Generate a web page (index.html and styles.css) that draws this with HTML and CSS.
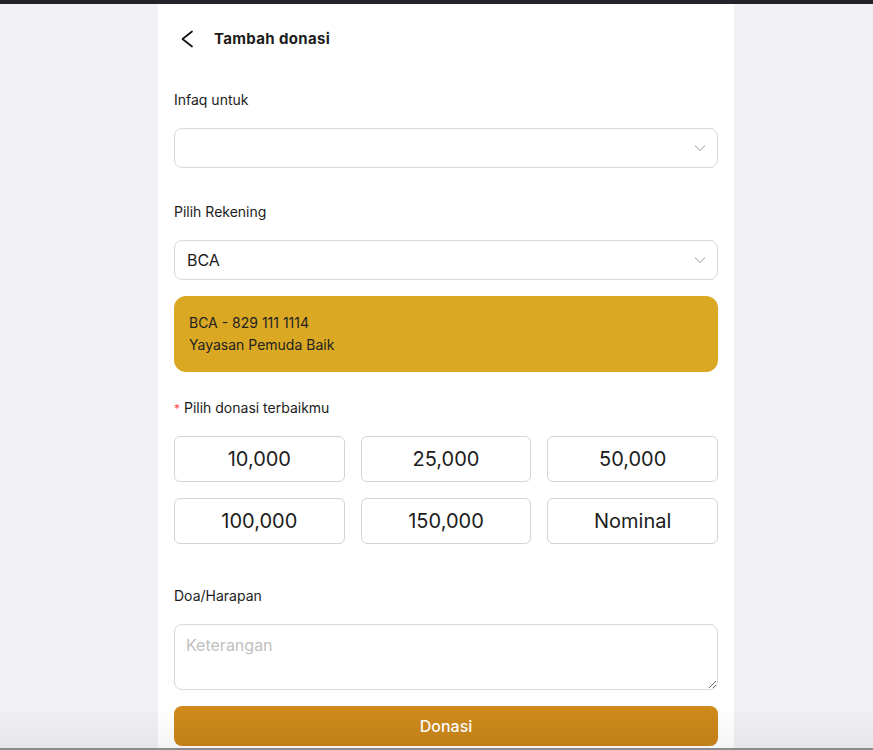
FILE: index.html
```html
<!DOCTYPE html>
<html lang="id">
<head>
<meta charset="utf-8">
<title>Tambah donasi</title>
<link rel="stylesheet" href="styles.css">
</head>
<body>
<div class="topbar"></div>
<main class="page">
  <header class="header">
    <svg class="back" width="24" height="24" viewBox="0 0 24 24" fill="none" stroke="#111" stroke-width="1.7" stroke-linecap="round" stroke-linejoin="round"><path d="M17 4.5 L7.5 12 L17 19.5"/></svg>
    <h1 class="title">Tambah donasi</h1>
  </header>

  <section class="field">
    <div class="label">Infaq untuk</div>
    <div class="select">
      <span class="select-value"></span>
      <svg class="caret" width="12" height="8" viewBox="0 0 12 8" fill="none" stroke="#bdbdbd" stroke-width="1.1"><path d="M1 1.5 L6 6.5 L11 1.5"/></svg>
    </div>
  </section>

  <section class="field field-rek">
    <div class="label">Pilih Rekening</div>
    <div class="select">
      <span class="select-value">BCA</span>
      <svg class="caret" width="12" height="8" viewBox="0 0 12 8" fill="none" stroke="#bdbdbd" stroke-width="1.1"><path d="M1 1.5 L6 6.5 L11 1.5"/></svg>
    </div>
    <div class="account">
      <div>BCA - 829 111 1114</div>
      <div>Yayasan Pemuda Baik</div>
    </div>
  </section>

  <section class="field field-amount">
    <div class="label"><span class="req">*</span> Pilih donasi terbaikmu</div>
    <div class="amounts">
      <button class="amount">10,000</button>
      <button class="amount">25,000</button>
      <button class="amount">50,000</button>
      <button class="amount">100,000</button>
      <button class="amount">150,000</button>
      <button class="amount">Nominal</button>
    </div>
  </section>

  <section class="field field-doa">
    <div class="label">Doa/Harapan</div>
    <textarea class="textarea" placeholder="Keterangan"></textarea>
    <button class="submit">Donasi</button>
  </section>
</main>
<div class="bottom-fade"></div>
<div class="bottom-line"></div>
</body>
</html>
```
FILE: styles.css
```css
html, body {
  margin: 0;
  padding: 0;
  height: 100%;
  overflow: hidden;
}
body {
  background: #f0f0f5;
  font-family: Inter, "Noto Sans", sans-serif;
  color: #1c1c1c;
}
.topbar {
  height: 4px;
  background: #222228;
}
.page {
  width: 544px;
  margin-left: 158px;
  padding: 0 16px;
  background: #fff;
  min-height: 746px;
  box-sizing: content-box;
}
.header {
  height: 70px;
  display: flex;
  align-items: center;
  padding-bottom: 1px;
  box-sizing: border-box;
}
.back {
  margin-left: 1px;
  margin-right: 15px;
  width: 24px;
  height: 24px;
}
.title {
  margin: 0;
  font-size: 15px;
  font-weight: 700;
  letter-spacing: 0.35px;
}
.field {
  padding-top: 15px;
}
.field-rek { padding-top: 33px; }
.field-amount { padding-top: 25px; }
.field-doa { padding-top: 41px; }
.label {
  font-size: 14px;
  line-height: 22px;
  height: 22px;
  margin-bottom: 17px;
  overflow: hidden;
}
.req {
  color: #ff4d4f;
  font-size: 12px;
  line-height: 1;
}
.select {
  height: 38px;
  border: 1px solid #d9d9d9;
  border-radius: 8px;
  display: flex;
  align-items: center;
  justify-content: space-between;
  padding: 0 12px;
}
.select-value {
  font-size: 16px;
}
.caret {
  margin-right: -1px;
}
.account {
  margin-top: 16px;
  background: #daa822;
  border-radius: 12px;
  height: 76px;
  box-sizing: border-box;
  padding: 16px 15px;
  font-size: 14px;
  line-height: 22px;
  color: #222;
}
.amounts {
  display: grid;
  grid-template-columns: 1fr 1fr 1fr;
  column-gap: 16px;
  row-gap: 16px;
}
.amount {
  height: 46px;
  background: #fff;
  border: 1px solid #d4d4d8;
  border-radius: 6px;
  font-family: inherit;
  font-size: 20px;
  color: #1c1c1c;
  padding: 0;
}
.textarea {
  display: block;
  width: 100%;
  height: 66px;
  box-sizing: border-box;
  border: 1px solid #d9d9d9;
  border-radius: 8px;
  padding: 8px 11px;
  font-family: inherit;
  font-size: 16px;
  line-height: 24px;
  resize: vertical;
  outline: none;
}
.textarea::placeholder {
  color: #bfbfbf;
}
.submit {
  display: block;
  width: 100%;
  margin-top: 16px;
  height: 40px;
  border: none;
  border-radius: 8px;
  background: linear-gradient(#cf8a1a, #c9861a);
  color: #fff;
  font-family: inherit;
  font-size: 16px;
  font-weight: 500;
}
.bottom-fade {
  position: fixed;
  left: 0;
  right: 0;
  bottom: 2px;
  height: 40px;
  background: linear-gradient(rgba(0,0,0,0), rgba(0,0,0,0.045));
  pointer-events: none;
}
.bottom-line {
  position: fixed;
  left: 0;
  right: 0;
  bottom: 0;
  height: 2px;
  background: #8c8c8c;
}
```
